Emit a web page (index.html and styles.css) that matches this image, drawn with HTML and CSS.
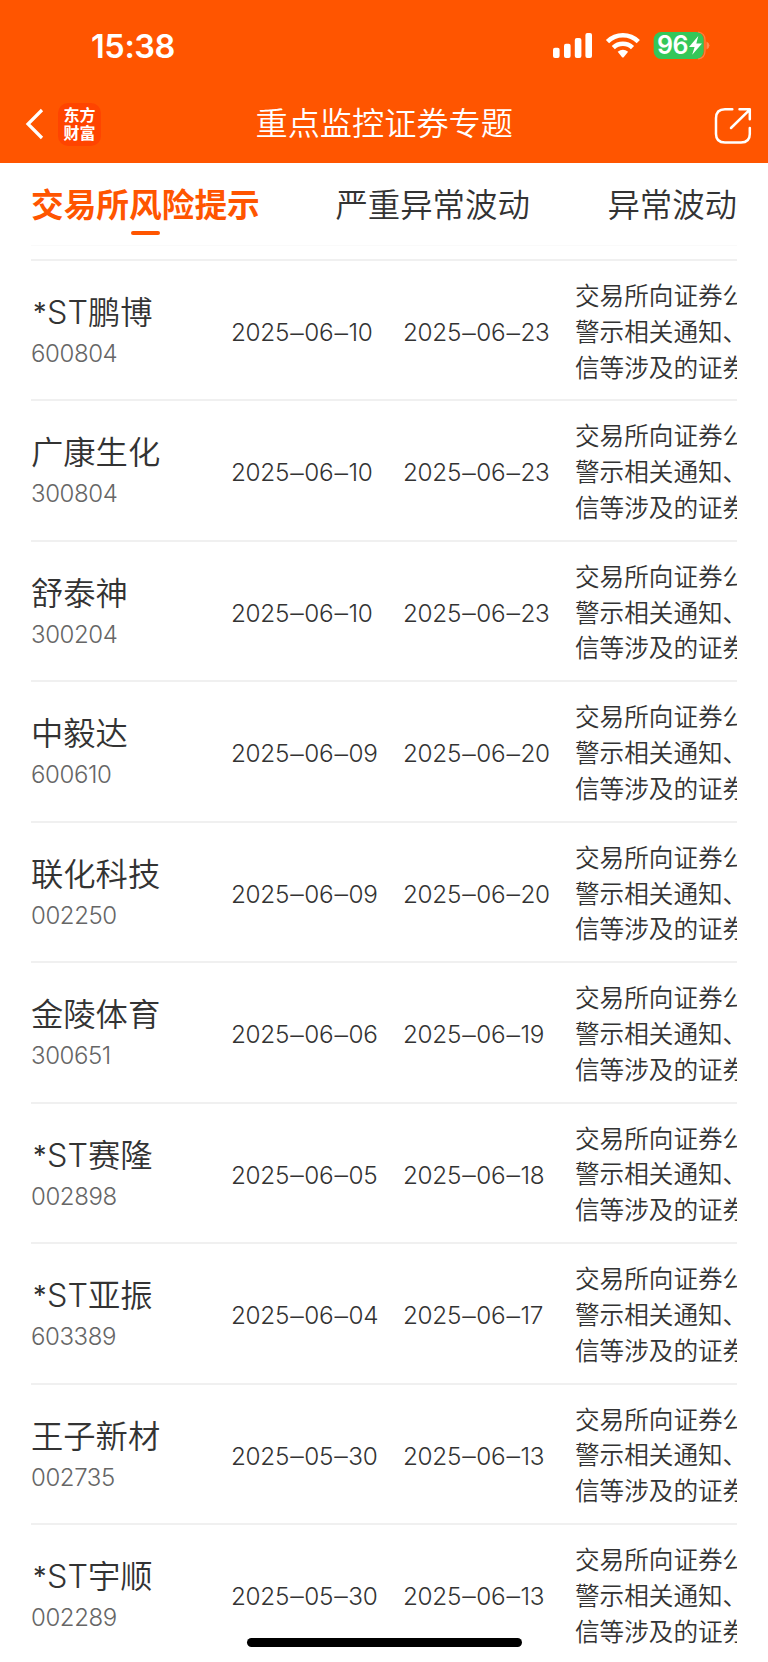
FILE: index.html
```
<!DOCTYPE html>
<html lang="zh-CN">
<head>
<meta charset="utf-8">
<title>重点监控证券专题</title>
<link rel="stylesheet" href="styles.css">
</head>
<body>
<div class="screen">
<header class="header">
<div class="status">
<span class="clock">15:38</span>
<svg class="signals" width="160" height="30" viewBox="0 0 160 30">
<g fill="#fff"><rect x="0" y="16.8" width="6.6" height="10.2" rx="2"/><rect x="11" y="12.8" width="6.6" height="14.2" rx="2"/><rect x="21.8" y="7" width="6.6" height="20" rx="2"/><rect x="32.4" y="2" width="6.6" height="25" rx="2"/></g>
<g fill="none" stroke="#fff" stroke-width="4.6"><path d="M54.5 10.6A22 22 0 0 1 85.300 10.600"/><path d="M60.300 16.600A14 14 0 0 1 79.500 16.600"/></g>
<path fill="#fff" d="M64.700 20.800Q69.900 16.600 75.100 20.800L70.700 26.200Q69.900 27 69.100 26.200Z"/>
<rect x="100.700" y="1" width="50" height="27" rx="7.500" fill="#34c759"/>
<path d="M145 1Q152 2 152 9V20Q152 27 145 28" fill="none" stroke="#ff9a66" stroke-opacity=".65" stroke-width="1.200"/>
<path d="M153.500 10.500Q156.500 12 156.500 14.500T153.500 18.500Z" fill="#ff8b51"/>
<text x="104" y="23" class="battery">96</text>
<path fill="#fff" d="M145.300 5L136 16H141.600L139.200 23.800L149 12.600H143.300Z"/>
</svg>
</div>
<div class="nav">
<svg width="20" height="32" viewBox="0 0 20 32"><path d="M17 2L3 16L17 30" fill="none" stroke="#fff" stroke-width="3.200"/></svg>
<div class="logo"><span>东方</span><span>财富</span></div>
<h1 class="title">重点监控证券专题</h1>
<svg class="share" width="38" height="38" viewBox="0 0 38 38"><path d="M18.300 2.300H11Q2 2.300 2 11.300V27Q2 35.500 11 35.500H27Q35.800 35.500 35.800 27V21M25.500 2.300H35.800V12.300M35 3.300L17 21" fill="none" stroke="#fff" stroke-width="2.500" stroke-linecap="round" stroke-linejoin="round"/></svg>
</div>
</header>
<nav class="tabs"><span class="tab active">交易所风险提示</span><span class="tab second">严重异常波动</span><span class="tab">异常波动</span></nav>
<main class="list">
<div class="row"><div class="stock"><b><u>*</u>ST鹏博</b><i>600804</i></div><time>2025<s>–</s>06<s>–</s>10</time><time>2025<s>–</s>06<s>–</s>23</time><p>交易所向证券公<br>警示相关通知、<br>信等涉及的证券</p></div>
<div class="row"><div class="stock"><b>广康生化</b><i>300804</i></div><time>2025<s>–</s>06<s>–</s>10</time><time>2025<s>–</s>06<s>–</s>23</time><p>交易所向证券公<br>警示相关通知、<br>信等涉及的证券</p></div>
<div class="row"><div class="stock"><b>舒泰神</b><i>300204</i></div><time>2025<s>–</s>06<s>–</s>10</time><time>2025<s>–</s>06<s>–</s>23</time><p>交易所向证券公<br>警示相关通知、<br>信等涉及的证券</p></div>
<div class="row"><div class="stock"><b>中毅达</b><i>600610</i></div><time>2025<s>–</s>06<s>–</s>09</time><time>2025<s>–</s>06<s>–</s>20</time><p>交易所向证券公<br>警示相关通知、<br>信等涉及的证券</p></div>
<div class="row"><div class="stock"><b>联化科技</b><i>002250</i></div><time>2025<s>–</s>06<s>–</s>09</time><time>2025<s>–</s>06<s>–</s>20</time><p>交易所向证券公<br>警示相关通知、<br>信等涉及的证券</p></div>
<div class="row"><div class="stock"><b>金陵体育</b><i>300651</i></div><time>2025<s>–</s>06<s>–</s>06</time><time>2025<s>–</s>06<s>–</s>19</time><p>交易所向证券公<br>警示相关通知、<br>信等涉及的证券</p></div>
<div class="row"><div class="stock"><b><u>*</u>ST赛隆</b><i>002898</i></div><time>2025<s>–</s>06<s>–</s>05</time><time>2025<s>–</s>06<s>–</s>18</time><p>交易所向证券公<br>警示相关通知、<br>信等涉及的证券</p></div>
<div class="row"><div class="stock"><b><u>*</u>ST亚振</b><i>603389</i></div><time>2025<s>–</s>06<s>–</s>04</time><time>2025<s>–</s>06<s>–</s>17</time><p>交易所向证券公<br>警示相关通知、<br>信等涉及的证券</p></div>
<div class="row"><div class="stock"><b>王子新材</b><i>002735</i></div><time>2025<s>–</s>05<s>–</s>30</time><time>2025<s>–</s>06<s>–</s>13</time><p>交易所向证券公<br>警示相关通知、<br>信等涉及的证券</p></div>
<div class="row"><div class="stock"><b><u>*</u>ST宇顺</b><i>002289</i></div><time>2025<s>–</s>05<s>–</s>30</time><time>2025<s>–</s>06<s>–</s>13</time><p>交易所向证券公<br>警示相关通知、<br>信等涉及的证券</p></div>
</main>
<div class="home"></div>
</div>
</body>
</html>
```

FILE: styles.css
```
* { box-sizing: border-box; margin: 0; padding: 0; }
body { background: #fff; color: #333; font-family: Inter, "Noto Sans CJK SC", sans-serif; }
.screen { position: relative; width: 768px; height: 1662px; overflow: hidden; }
.header { height: 163px; background: #ff5500; color: #fff; }
.status { height: 92px; padding: 31px 55px 0 91px; display: flex; justify-content: space-between; align-items: flex-start; }
.clock { font-size: 32.500px; line-height: 32px; font-weight: 600; letter-spacing: -0.4px; }
.battery { font: 600 25px Inter, sans-serif; fill: #fff; letter-spacing: -0.6px; }
.nav { height: 64px; padding: 0 16px 0 25px; display: flex; align-items: center; }
.logo { width: 43px; height: 43px; margin-left: 13px; padding-bottom: 2px; border-radius: 10px; background: #ff4400; display: flex; flex-direction: column; align-items: center; justify-content: center; font: 700 16px/18px "Noto Sans CJK SC", sans-serif; }
.title { flex: 1; padding-left: 154.500px; font-size: 32.200px; line-height: 44px; font-weight: 350; white-space: nowrap; }
.share { margin-top: 4px; flex: none; }
.tabs { height: 83px; margin: 0 31px 13px; padding-top: 20px; border-bottom: 1px solid #fafafa; display: flex; justify-content: space-between; font-size: 32.400px; line-height: 45px; font-weight: 350; white-space: nowrap; }
.active { color: #ff5500; font-size: 32.700px; font-weight: 700; display: flex; flex-direction: column; align-items: center; line-height: 44px; }
.active::after { content: ""; width: 29px; height: 4px; margin-top: 4px; border-radius: 2px; background: #ff5500; flex: none; }
.second { padding-right: 2px; }
.list { margin: 0 31px; }
.row { height: 140.450px; border-top: 2px solid #f0f0f0; display: grid; grid-template-columns: 200px 172px 172px 162px; }
.stock b { display: block; margin-top: 30px; height: 45px; font-size: 32.300px; line-height: 44px; font-weight: 350; white-space: nowrap; }
.stock u { display: inline-block; width: 16px; padding-left: 2px; font-size: 27px; line-height: 30px; vertical-align: 2px; font-weight: 400; text-decoration: none; }
.stock i { display: block; font-style: normal; font-size: 24px; line-height: 36px; color: #666; font-weight: 350; letter-spacing: -0.4px; }
.row time { padding-top: 53px; font-size: 24.300px; line-height: 36px; font-weight: 350; letter-spacing: -0.300px; white-space: nowrap; }
.row s { position: relative; top: -1.500px; margin: 0 0.800px 0 1.200px; font-family: "Liberation Sans", sans-serif; text-decoration: none; }
.row p { padding-top: 18px; font-size: 24.600px; line-height: 35.800px; overflow: hidden; white-space: nowrap; font-weight: 350; }
.home { position: absolute; left: 247px; top: 1638px; width: 275px; height: 9px; border-radius: 5px; background: #000; }
```
